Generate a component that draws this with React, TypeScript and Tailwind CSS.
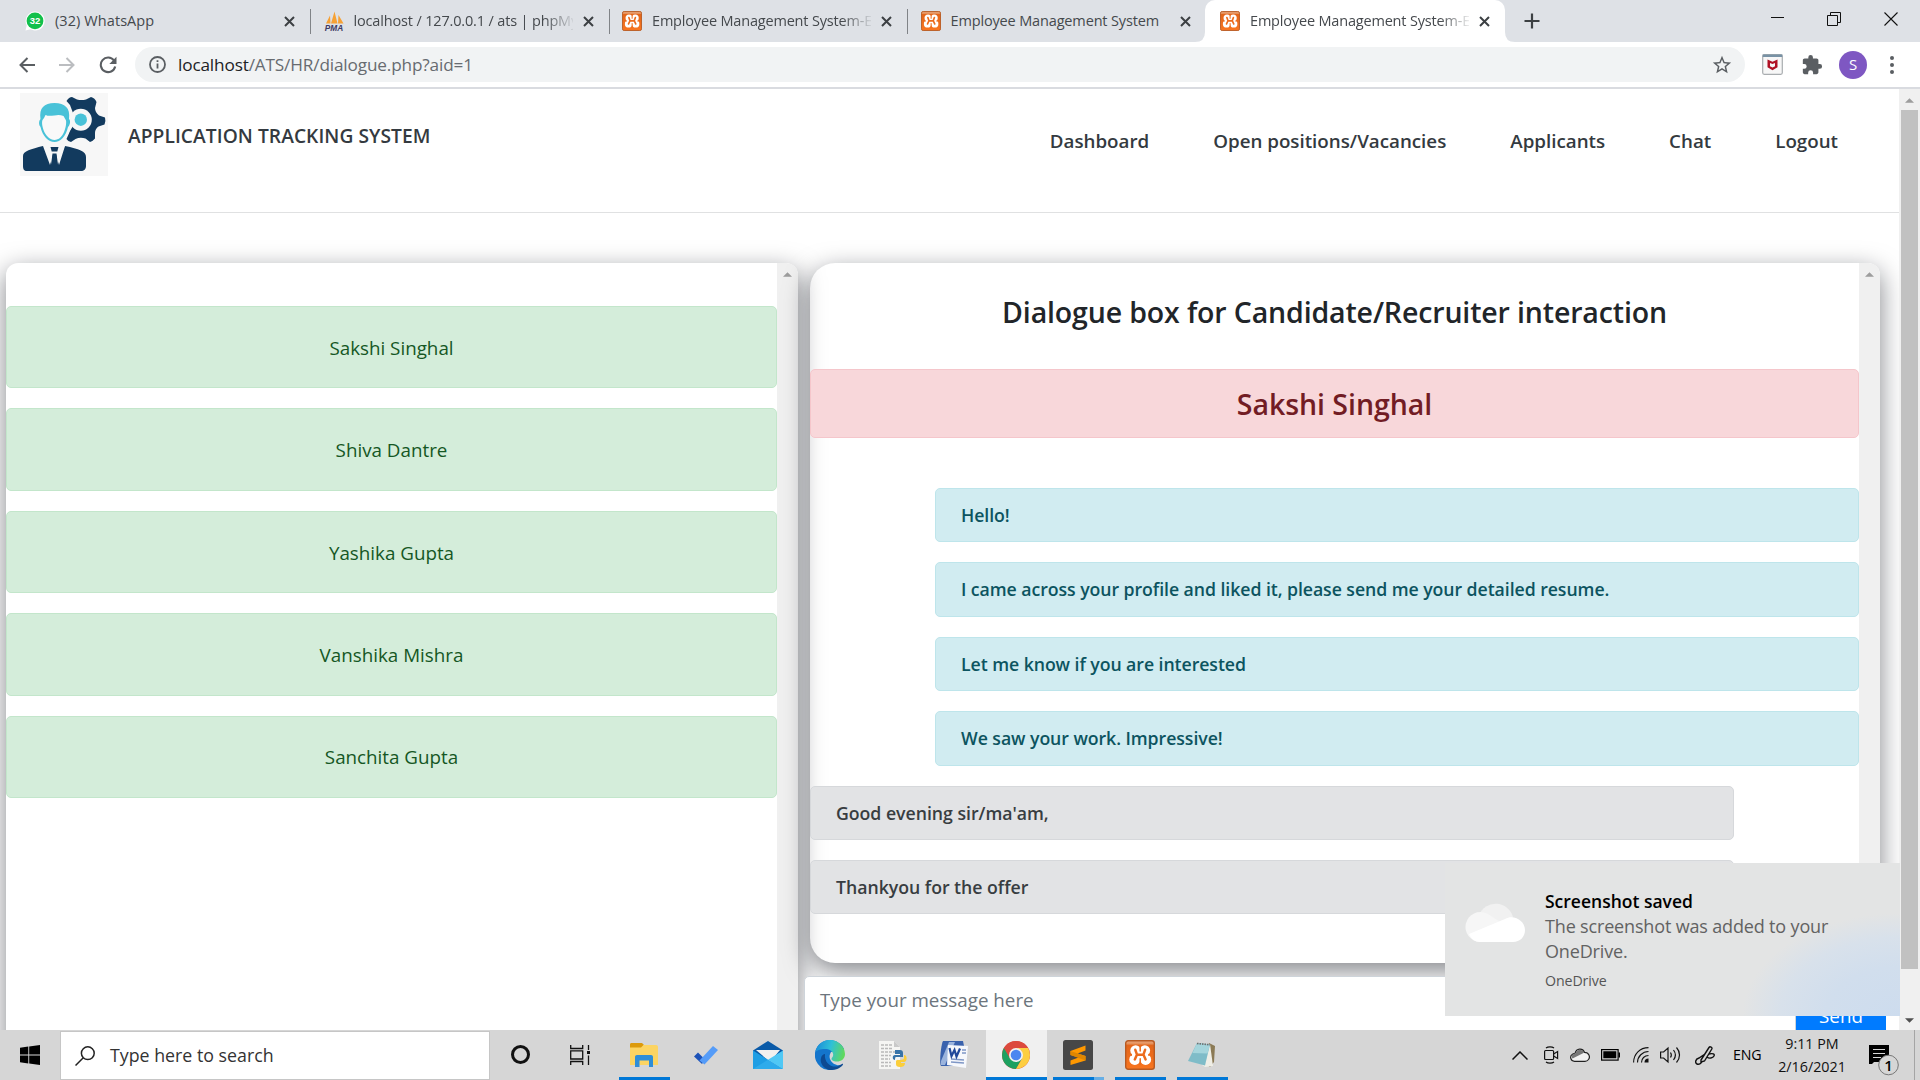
import React from "react";

type P = { children?: React.ReactNode; className?: string };

const Xampp = ({ className = "" }: P) => (
  <svg viewBox="0 0 30 30" preserveAspectRatio="none" className={"shrink-0 " + className}>
    <defs>
      <linearGradient id="xg" x1="0" y1="0" x2="0" y2="1">
        <stop offset="0" stopColor="#e9a77d" />
        <stop offset="0.12" stopColor="#e58d55" />
        <stop offset="0.15" stopColor="#e2651a" />
        <stop offset="1" stopColor="#f9751f" />
      </linearGradient>
    </defs>
    <rect x="0.7" y="0.7" width="28.6" height="28.6" rx="2.5" fill="url(#xg)" stroke="#b85a22" strokeWidth="1.4" />
    <g fill="#fff">
      <circle cx="10.600" cy="10.600" r="5.300" />
      <circle cx="19.800" cy="10.600" r="5.300" />
      <circle cx="9.800" cy="19.400" r="5.500" />
      <circle cx="20.600" cy="19.400" r="5.500" />
      <path d="M7 11h16.500v8.500H7z" />
    </g>
    <path d="M10.300 9.800l1.700 4.800-2.200 4.800M20.100 9.800l-1.700 4.800 2.200 4.800M12 14.800h6.400" fill="none" stroke="#ec6b1c" strokeWidth="2.500" strokeLinecap="round" strokeLinejoin="round" />
    <path d="M15.200 5.500v5.500M15.200 18.800v5.500" stroke="#ec6b1c" strokeWidth="1.500" strokeLinecap="round" />
    <path d="M3.500 15l3.500-1.200v2.200zM26.700 15l-3.500-1.200v2.200z" fill="#ec6b1c" />
  </svg>
);

const WhatsApp = () => (
  <svg viewBox="0 0 20 20" className="h-5 w-5 shrink-0">
    <path d="M10 0.500a9.500 9.500 0 1 1-4.500 17.800L0.500 19.500 1.700 14.500A9.500 9.500 0 0 1 10 .5z" fill="#fff" />
    <circle cx="10" cy="9.900" r="8.400" fill="#12c04b" />
    <text x="10" y="13.300" textAnchor="middle" fontSize="9.500" fontWeight="700" fill="#fff" fontFamily="Liberation Sans, sans-serif">32</text>
  </svg>
);

const Pma = () => (
  <svg viewBox="0 0 20 20" className="h-5 w-5 shrink-0">
    <path d="M2 12.500 6 4.500 6.500 12.500zM7 12.500 10.500 .5l3 12zM14 12.500 14.500 4l5 8.500z" fill="#f6a134" />
    <text x="10" y="19.500" textAnchor="middle" fontSize="8.300" fontWeight="700" fontStyle="italic" fill="#3d3a63" fontFamily="Liberation Sans, sans-serif">PMA</text>
  </svg>
);

const Cross = () => (
  <svg viewBox="0 0 11 11" className="h-[11px] w-[11px] shrink-0" stroke="#3c4043" strokeWidth="2">
    <path d="M1 1l9 9M10 1l-9 9" />
  </svg>
);

type TabData = { icon: React.ReactNode; title: string; fade: boolean; cls: string };

const tabs: TabData[] = [
  { icon: <WhatsApp />, title: "(32) WhatsApp", fade: false, cls: "tracking-[0.080px]" },
  { icon: <Pma />, title: "localhost / 127.0.0.1 / ats | phpMy", fade: true, cls: "tracking-[-0.160px]" },
  { icon: <Xampp className="h-5 w-5" />, title: "Employee Management System-E", fade: true, cls: "tracking-[-0.180px]" },
  { icon: <Xampp className="h-5 w-5" />, title: "Employee Management System", fade: false, cls: "tracking-[-0.150px]" },
];

const fadeMask = "[mask-image:linear-gradient(to_right,#000_190px,transparent_222px)]";

const TabBody = ({ t }: { t: TabData }) => (
  <>
    {t.icon}
    <div className={"ml-[10px] w-[219px] whitespace-nowrap text-[14.500px] leading-5 text-[#45494d] " + t.cls + " " + (t.fade ? fadeMask : "")}>{t.title}</div>
    <div className="ml-[10px]"><Cross /></div>
  </>
);

const TabStrip = () => (
  <div className="flex h-[42px] shrink-0 bg-[#dee1e6] pl-3">
    {tabs.map((t, i) => (
      <div key={i} className="flex h-[42px] w-[298.500px] shrink-0 items-center pl-[13px]">
        <TabBody t={t} />
        {i < 3 && <div className="ml-[15px] h-[25px] w-px bg-[#808387]" />}
      </div>
    ))}
    <svg viewBox="0 0 10 42" className="-ml-[11px] h-[42px] w-[10px] shrink-0" fill="#fff"><path d="M0 42Q10 42 10 32V42z" /></svg>
    <div className="flex h-[42px] w-[300px] shrink-0 items-center rounded-t-[10px] bg-white pl-[15px]">
      <TabBody t={tabs[2]} />
    </div>
    <svg viewBox="0 0 10 42" className="h-[42px] w-[10px] shrink-0" fill="#fff"><path d="M10 42Q0 42 0 32V42z" /></svg>
    <svg viewBox="0 0 16 16" className="ml-[9px] mt-[13px] h-4 w-4" stroke="#3c4043" strokeWidth="2.200"><path d="M8 .5v15M.5 8h15" /></svg>
    <div className="ml-auto mr-[22px] mt-3 flex">
      <svg viewBox="0 0 14 14" className="h-[14px] w-[14px]" stroke="#111" strokeWidth="1"><path d="M0 5.500h13" /></svg>
      <svg viewBox="0 0 14 14" className="ml-[42px] h-[14px] w-[14px]" stroke="#111" fill="none"><path d="M.5 3.500h10v10h-10zM3.500 3V.5h10v10H11" /></svg>
      <svg viewBox="0 0 14 14" className="ml-[43px] h-[14px] w-[14px]" stroke="#111" strokeWidth="1.100"><path d="M.5 .5l13 13M13.500 .5l-13 13" /></svg>
    </div>
  </div>
);

const Toolbar = () => (
  <div className="flex h-[47px] shrink-0 items-center border-b-2 border-[#d9dbe0] bg-white pl-[19px]">
    <svg viewBox="0 0 16 16" className="h-4 w-4" stroke="#5a5e62" strokeWidth="2" fill="none"><path d="M16 8H1.500M8.500 1L1.500 8l7 7" /></svg>
    <svg viewBox="0 0 16 16" className="ml-6 h-4 w-4" stroke="#bbbdc0" strokeWidth="2" fill="none"><path d="M0 8h14.500M7.500 1l7 7-7 7" /></svg>
    <svg viewBox="0 0 18 18" className="ml-[24px] h-[18px] w-[18px]" fill="none"><path d="M15 4.500A7.300 7.300 0 1 0 16.200 10.500" stroke="#5a5e62" strokeWidth="2.100" /><path d="M17.500 .8v7.200h-7.200z" fill="#5a5e62" /></svg>
    <div className="ml-[18px] flex h-[35px] w-[1610px] items-center rounded-full bg-[#f1f3f4] pl-[14px]">
      <svg viewBox="0 0 17 17" className="h-[17px] w-[17px]" stroke="#5a5e62" strokeWidth="1.800" fill="none"><circle cx="8.500" cy="8.500" r="7.500" /><path d="M8.500 7.500v5M8.500 4.200v1.900" /></svg>
      <div className="ml-3 whitespace-nowrap text-[17.200px] leading-6 tracking-[-0.150px] text-[#202124]">localhost<span className="text-[#676b70]">/ATS/HR/dialogue.php?aid=1</span></div>
      <svg viewBox="0 0 24 24" className="ml-auto mr-3 h-[22px] w-[22px]" fill="#5a5e62"><path d="M22 9.240l-7.190-.62L12 2 9.190 8.630 2 9.240l5.460 4.730L5.820 21 12 17.270 18.180 21l-1.630-7.030L22 9.240zM12 15.400l-3.760 2.270 1-4.280-3.320-2.880 4.380-.38L12 6.100l1.710 4.040 4.380.38-3.320 2.880 1 4.280L12 15.400z" /></svg>
    </div>
    <svg viewBox="0 0 21 21" className="ml-[17px] h-[21px] w-[21px]"><rect x=".7" y=".7" width="19.600" height="19.600" rx="1.500" fill="#f7f7f7" stroke="#a9adb0" strokeWidth="1.200" /><path d="M.7 .5h19.600v2.500H.7z" fill="#7892a5" /><path d="M5.500 5.500l5 2.200 5-2.200v7.800l-5 3-5-3z" fill="#b01024" /><path d="M8 9v3.200l2.500 1.400 2.500-1.400V9l-2.500 1.100z" fill="#f7f7f7" /></svg>
    <svg viewBox="0 0 24 24" className="ml-[18px] h-[22px] w-[22px]" fill="#5a5e62"><path d="M20.500 11H19V7c0-1.100-.9-2-2-2h-4V3.500a2.500 2.500 0 0 0-5 0V5H4c-1.100 0-2 .9-2 2v3.800h1.500a2.700 2.700 0 0 1 0 5.400H2V20c0 1.100.9 2 2 2h3.800v-1.500a2.700 2.700 0 0 1 5.400 0V22H17c1.100 0 2-.9 2-2v-4h1.500a2.500 2.500 0 0 0 0-5z" /></svg>
    <div className="ml-[16px] flex h-7 w-7 items-center justify-center rounded-full bg-[#7e57c2] text-[15px] text-white">S</div>
    <svg viewBox="0 0 4 18" className="ml-[23px] h-[18px] w-1" fill="#5a5e62"><circle cx="2" cy="2" r="2" /><circle cx="2" cy="9" r="2" /><circle cx="2" cy="16" r="2" /></svg>
  </div>
);

const Logo = () => (
  <svg viewBox="0 0 88 83" className="ml-5 mt-1 h-[83px] w-[88px] shrink-0">
    <rect width="88" height="83" fill="#f7f7f7" />
    <path d="M46.500 8Q49 4 52 4L57 6.500Q61.500 7.500 66 6.500L71 4Q75 5 76.500 9L75 15Q75 19 79 22.500L85 24.500Q86 28 84.500 31.500L78.500 33.500Q75 36 75 40V45.500Q73 48 70 49L65.500 45.500Q60 44 55.500 46L51 49Q48 48.500 46.500 46L50 38 53 33V20L50 12z" fill="#123a5e" />
    <circle cx="60.800" cy="26.700" r="11" fill="#f7f7f7" />
    <circle cx="60.800" cy="26.700" r="6.200" fill="#49c2d8" />
    <path d="M34.500 7c10 0 17 6 18 16 1 6-1 12-3 15-3 8-8 14-15 14z" fill="#f7f7f7" />
    <path d="M20.500 26C19 15 24 10 34.500 10s16 5 14.500 16c2 2 1 6-1 8-2 9-7.500 15-13.500 15S22.500 43 20.500 34c-2-2-2-6 0-8z" fill="#49c2d8" />
    <path d="M22.500 27c1-1 2-3 3-5 2 1 4 1 9 .5 4-1 6-.5 9 .5 1 2 2 3 2.500 4.500 1 5-2.500 19.500-11.500 19.500S20.500 32 22.500 27z" fill="#f9f9f9" />
    <path d="M3 63c0-5 8-7 20-10l7 19 2-10h5l2 10 6-19c14 3 21 5 21 11v9c0 3-2 5-5 5H7c-3 0-4-2-4-5z" fill="#123a5e" />
    <path d="M24 52l7.500 20L33 60l-3-6zM45 52l-7.500 20L36 60l3-6z" fill="#f7f7f7" />
    <path d="M30.500 54h8l-1.200 4.500h-5.600zM32.500 60.500h4L38 72H31z" fill="#123a5e" />
  </svg>
);

const Arrow = ({ className = "" }: P) => (
  <svg viewBox="0 0 10 5" className={"h-[5px] w-[9px] " + className} fill="currentColor"><path d="M5 0l5 5H0z" /></svg>
);

const people = ["Sakshi Singhal", "Shiva Dantre", "Yashika Gupta", "Vanshika Mishra", "Sanchita Gupta"];
const sent = ["Hello!", "I came across your profile and liked it, please send me your detailed resume.", "Let me know if you are interested", "We saw your work. Impressive!"];
const received = ["Good evening sir/ma'am,", "Thankyou for the offer"];

const Site = () => (
  <div className="flex h-[941px] w-[1899px] shrink-0 flex-col overflow-hidden bg-white">
    <header className="flex h-[124px] shrink-0 border-b border-[#e0e1e2] font-semibold text-[#343a40]">
      <Logo />
      <div className="ml-5 mt-[33px] whitespace-nowrap text-[19.200px] leading-7 tracking-[0.060px]">APPLICATION TRACKING SYSTEM</div>
      <nav className="ml-auto mr-[61px] mt-[38px] flex gap-16 whitespace-nowrap text-[18.760px] leading-7">
        <div>Dashboard</div><div>Open positions/Vacancies</div><div>Applicants</div><div>Chat</div><div>Logout</div>
      </nav>
    </header>
    <main className="flex pl-[6px] pt-[50px]">
      <section className="flex h-[900px] w-[792px] shrink-0 overflow-hidden rounded-[12px] shadow-[0_8px_26px_rgba(5,10,20,0.5)]">
        <div className="flex w-[771px] flex-col gap-5 pt-[43px]">
          {people.map((p) => (
            <div key={p} className="flex h-[82.400px] shrink-0 items-center justify-center rounded-[5px] border border-[#c3e6cb] bg-[#d4edda] pt-[1.500px] text-[18.800px] text-[#155724]">{p}</div>
          ))}
        </div>
        <div className="flex w-[21px] justify-center bg-[#f0f0f0] pt-[9px] text-[#9d9d9d]"><Arrow /></div>
      </section>
      <div className="relative w-[1090px] shrink-0 pl-3">
        <section className="flex h-[700px] w-[1070px] overflow-hidden rounded-l-[25px] rounded-r-[12px] shadow-[0_8px_26px_rgba(5,10,20,0.5)]">
          <div className="flex w-[1049px] flex-col">
            <h3 className="mt-[31px] text-center text-[28.500px] font-semibold leading-9 tracking-[-0.140px] text-[#212529]">Dialogue box for Candidate/Recruiter interaction</h3>
            <div className="mt-[39px] flex h-[69px] shrink-0 items-center justify-center rounded-[5px] border border-[#f5c6cb] bg-[#f8d7da] pt-[2px] text-[28.500px] font-semibold tracking-[-0.050px] text-[#721c24]">Sakshi Singhal</div>
            <div className="mt-[50px] flex flex-col gap-5">
              {sent.map((m) => (
                <div key={m} className="ml-[125px] flex h-[54.400px] shrink-0 items-center rounded-[5px] border border-[#bee5eb] bg-[#d1ecf1] pl-[25px] text-[17.700px] font-semibold tracking-[-0.060px] text-[#0c5460]">{m}</div>
              ))}
              {received.map((m) => (
                <div key={m} className="mr-[125px] flex h-[54.400px] shrink-0 items-center rounded-[5px] border border-[#d6d8db] bg-[#e2e3e5] pl-[25px] pt-px text-[17.700px] font-semibold tracking-[-0.020px] text-[#383d41]">{m}</div>
              ))}
            </div>
          </div>
          <div className="flex w-[21px] justify-center bg-[#f0f0f0] pt-[9px] text-[#9d9d9d]"><Arrow /></div>
        </section>
        <div className="-ml-[6px] mt-[13px] flex h-[60px] w-[1082px]">
          <div className="w-[992px] rounded-l-[5px] border border-[#ced4da] bg-white pl-[15px] pt-[9px] text-[18.800px] leading-7 text-[#6c757d]">Type your message here</div>
          <div className="flex w-[90px] justify-center rounded-r-[5px] bg-[#007bff] pt-[26px] text-[18.800px] leading-7 text-white">Send</div>
        </div>
      </div>
    </main>
  </div>
);

const Toast = () => (
  <div className="absolute left-[1445px] top-[863px] flex h-[153px] w-[455px] bg-[#e3e4e4] bg-[radial-gradient(ellipse_150px_98px_at_100%_100%,#cddcee_0%,#d1deed_50%,#d8e1eb_80%,#e3e4e4_105%)]">
    <svg viewBox="0 0 60 39" className="ml-5 mt-10 h-[39px] w-[60px]">
      <path d="M14 12A18 18 0 0 1 48 14L40 30H10z" fill="#f1f1f1" />
      <path d="M15 39A15 15 0 1 1 22 10.500L40 22 30 39z" fill="#f6f6f6" />
      <path d="M4 31 40 16c9-5 20 2 20 11 0 7-5 12-12 12H15C10 39 6 36 4 31z" fill="#fff" />
    </svg>
    <div className="ml-[20px] mt-[26px] whitespace-nowrap leading-[25px]">
      <div className="text-[17.500px] font-semibold text-black">Screenshot saved</div>
      <div className="text-[18px] tracking-[-0.160px] text-[#626262]">The screenshot was added to your</div>
      <div className="text-[18px] tracking-[-0.160px] text-[#626262]">OneDrive.</div>
      <div className="mt-[5px] text-[14.200px] leading-[24px] tracking-[-0.100px] text-[#555]">OneDrive</div>
    </div>
  </div>
);

const Bar = ({ className = "" }: P) => <div className={"h-[3px] " + className} />;

const Slot = ({ children, className = "" }: P) => (
  <div className={"flex h-[50px] shrink-0 flex-col items-center " + className}>{children}</div>
);

const Taskbar = () => (
  <div className="flex h-[50px] shrink-0 bg-[#d6d6d6]">
    <div className="flex w-[60px] items-center justify-center">
      <svg viewBox="0 0 20 20" className="h-5 w-5" fill="#000"><path d="M0 2.800l8.300-1.200v8H0zM9.200 1.500L20 0v9.600H9.200zM0 10.400h8.300v8L0 17.200zM9.200 10.400H20V20L9.200 18.500z" /></svg>
    </div>
    <div className="mt-px flex h-[49px] w-[430px] items-center border border-[#c6c6c6] bg-white pl-[14px]">
      <svg viewBox="0 0 20 20" className="h-5 w-5" stroke="#222" strokeWidth="1.500" fill="none"><circle cx="12.800" cy="7.200" r="6.400" /><path d="M8.300 11.700L.5 19.500" /></svg>
      <div className="ml-[15px] whitespace-nowrap text-[17.800px] text-[#333]">Type here to search</div>
    </div>
    <Slot className="w-[60px] pt-[15px]"><div className="h-[19px] w-[19px] rounded-full border-[3px] border-[#111]" /></Slot>
    <Slot className="w-[60px] pt-[15px]">
      <svg viewBox="0 0 20 20" className="h-5 w-5" stroke="#111" strokeWidth="1.300" fill="none"><path d="M.7 0v3.500h12V0M.7 20v-3.500h12V20M.7 5.800h12v8.200H.7zM18.500 0v5M18.500 10.500V20" /><path d="M17 6h3v3h-3z" fill="#111" stroke="none" /></svg>
    </Slot>
    <div className="ml-[9px] flex">
      <Slot className="w-[51px]">
        <svg viewBox="0 0 28 24" className="mr-[2px] mt-[13px] h-6 w-7"><path d="M0 1.500C0 .7.500 0 1.500 0H12l2 2-2 3H0z" fill="#dc9a0b" /><path d="M0 4.500h11L13.500 2H26c1 0 2 .7 2 2v18H0z" fill="#fcd462" /><path d="M5 24V14c0-1.200.8-2 2-2h14c1.200 0 2 .8 2 2v10h-4v-6.500H9.500V24z" fill="#2f8ed8" /></svg>
        <Bar className="mt-auto w-full bg-[#0078d7]" />
      </Slot>
      <Slot className="w-[71px]">
        <svg viewBox="0 0 24 20" className="mt-[15px] h-5 w-6"><path d="M0 11.500L4 7.500l7 7-3 4.500z" fill="#1c52b8" /><path d="M5.500 15.500L19 1l5 4L10.500 19.500z" fill="#559cf8" /></svg>
      </Slot>
      <Slot className="w-[54px]">
        <svg viewBox="0 0 30 28" className="mt-[11px] h-7 w-[30px]"><path d="M0 9.500L15 0l15 9.500V18H0z" fill="#0a5aa8" /><path d="M3 9h24L17 21z" fill="#f3f1ef" /><path d="M0 9.500L30 28H0z" fill="#1f9ee4" /><path d="M30 9.500V28L15 18.800z" fill="#50c8f5" /><path d="M0 28l15-9.200L30 28z" fill="#2eabeb" /></svg>
      </Slot>
      <Slot className="w-[70px]">
        <svg viewBox="0 0 30 30" className="mt-[10px] h-[30px] w-[30px]">
          <defs><linearGradient id="e1" x1="0" y1=".3" x2="1" y2=".5"><stop offset="0" stopColor="#1b8cd8" /><stop offset=".5" stopColor="#2fc0d8" /><stop offset="1" stopColor="#61d95b" /></linearGradient></defs>
          <path d="M15 0a15 15 0 1 0 11 25c-4 1-9-1-11-6-1-3 0-5 1-7L29 9C27 4 21 0 15 0z" fill="#1475cc" />
          <path d="M.3 12A15 15 0 0 1 30 14c0 5-4 7.500-8 7.500-4 0-5.500-1.500-5.500-2.700 0-1 1.700-1.600 1.700-4C18.200 11 14 9 10 9 5 9 1.500 10.500.3 12z" fill="url(#e1)" />
          <path d="M10 14c-1 8 5 13.500 12 12.500l5-2.500c.8-.5 1.300.2.800.9C25 28.500 20 30 15 30 9 29.500 4.500 23 6 18c.8-3 2.500-4 4-4z" fill="#0d4a92" />
        </svg>
      </Slot>
      <Slot className="w-[56px]">
        <svg viewBox="0 0 28 28" className="mt-[11px] h-7 w-7"><path d="M0 0h15l6 6v22H0z" fill="#f5f5f3" /><path d="M15 0v6h6z" fill="#c9c9c9" /><path d="M2 4h11M2 7.500h11M2 11h16M2 14.500h10M2 18h9M2 21.500h10M2 25h10" stroke="#b9b9b9" strokeWidth="1.300" strokeDasharray="3 1" /><path d="M16 9h5c2 0 3 1 3 3v4h-7c-1 0-1 2-1 3-3 0-3-5 0-5h5v-1h-5z" fill="#3773a8" /><path d="M25 14c4 0 3 7 0 7h-3v1h4c0 3-2 4-5 4-3 0-4-1-4-3v-3c0-2 8 0 8-3z" fill="#fbce3b" /></svg>
      </Slot>
      <Slot className="w-[65px]">
        <svg viewBox="0 0 28 28" className="mt-[11px] h-7 w-7"><path d="M3 0h20l1 5-3 20H1C-1 22 1 4 3 0z" fill="#3a62ad" /><path d="M1 20L9 1h6L5 24H1z" fill="#9bb4dd" /><path d="M8 4l20 1-2 22-19-3z" fill="#f6f8fc" /><path d="M11 18l13 1M11 21l13 1M22 9h4M22 12h4" stroke="#7f97c6" strokeWidth="1.300" /><path d="M9.500 7l2 8 3-6 2 6.500L20 7.500" fill="none" stroke="#21489a" strokeWidth="2.200" /></svg>
      </Slot>
      <Slot className="w-[61px] bg-[#f0f0f0]">
        <svg viewBox="0 0 28 28" className="mr-[2px] mt-[11px] h-7 w-7"><circle cx="14" cy="14" r="14" fill="#dc4a3d" /><path d="M1.900 7A14 14 0 0 0 14 28l6-10.500L14 20l-6-2.500z" fill="#1da160" /><path d="M26.100 7A14 14 0 0 1 14 28l6.100-10.500L20 10 14 7z" fill="#fdce42" /><path d="M1.900 7A14 14 0 0 1 26.100 7H14z" fill="#dc4a3d" /><circle cx="14" cy="14" r="7" fill="#f1f1f1" /><circle cx="14" cy="14" r="5.300" fill="#4a86f0" /></svg>
        <Bar className="mt-auto w-full bg-[#0078d7]" />
      </Slot>
      <Slot className="ml-[6px] w-[51px]">
        <svg viewBox="0 0 30 30" className="mr-[2px] mt-[10px] h-[30px] w-[30px]"><rect width="30" height="30" rx="2.500" fill="#474747" /><path d="M7.500 11L22.500 5.500v5L14.500 13.500l8 2.500v4.500L7.500 25v-4.500l8-3-8-2.500z" fill="#ff9800" /><path d="M7.500 11v4l15 5.500V16z" fill="#e08600" /></svg>
        <div className="mt-auto flex w-full"><Bar className="w-[41px] bg-[#0078d7]" /><Bar className="w-[10px] bg-[#66aee5]" /></div>
      </Slot>
      <Slot className="ml-[11px] w-[51px]">
        <Xampp className="mr-[2px] mt-[10px] h-[30px] w-[30px]" />
        <Bar className="mt-auto w-full bg-[#0078d7]" />
      </Slot>
      <Slot className="ml-[11px] w-[51px]">
        <svg viewBox="0 0 28 28" className="mr-[2px] mt-[11px] h-7 w-7"><path d="M21 2l6 3-1 16-4 5-5-4z" fill="#8b7a55" /><path d="M22 3l3 22-8 1-3-2z" fill="#efeee6" /><path d="M9 2l13 1.500-5 21L0 20z" fill="#7fbcc8" /><path d="M9 2l13 1.500-2.500 9L4.500 12z" fill="#a5d5dc" /><path d="M9 2.500l13 1.300" stroke="#6d6d6d" strokeWidth="1.600" strokeDasharray="1.500 1" /></svg>
        <Bar className="mt-auto w-full bg-[#0078d7]" />
      </Slot>
    </div>
    <div className="ml-auto flex items-center">
      <svg viewBox="0 0 16 9" className="h-[9px] w-4" stroke="#111" strokeWidth="1.500" fill="none"><path d="M.5 8.500L8 1l7.500 7.500" /></svg>
      <svg viewBox="0 0 15 18" className="ml-4 h-[18px] w-[15px]" stroke="#111" strokeWidth="1.200" fill="none"><rect x=".6" y="4.500" width="9" height="9" rx="1" /><path d="M9.600 8l4-2.500v7l-4-2.500M2 2c2-1.600 6-1.600 8 0M2 16c2 1.600 6 1.600 8 0" /></svg>
      <svg viewBox="0 0 20 14" className="ml-[11px] h-[14px] w-5"><path d="M4.500 13.300C.5 13.300-.7 8 2.500 6.200 4 5.500 4.500 5.700 5 5.300 6.500 .3 12.500 -.3 14.500 4.300c4.500 0 6 4.700 4 7.200-1 1.300-2 1.800-3.500 1.800z" fill="#f2f2f2" stroke="#222" strokeWidth="1.200" /><path d="M2.800 6.500C4 5.700 5 6.300 5.500 5.500 7 1 12 .5 14 4.700L2.500 10.500C1.500 9 1.500 7.500 2.800 6.500z" fill="#777" /></svg>
      <svg viewBox="0 0 19 12" className="ml-[11px] h-3 w-[19px]"><rect x=".6" y=".6" width="16.500" height="10.500" fill="none" stroke="#000" strokeWidth="1.200" /><path d="M2.300 2.300h13v7h-13zM17.500 3.500h1.500v5h-1.500z" /></svg>
      <svg viewBox="0 0 16 16" className="ml-[13px] h-4 w-4" stroke="#111" strokeWidth="1.100" fill="none"><path d="M.6 15.500C.6 7 7 .6 15.500 .6M4.500 15.500c0-6 5-11 11-11M8.500 15.500c0-4 3-7 7-7" /><path d="M11.500 15.500a4 4 0 0 1 4-4v4z" fill="#111" stroke="none" /></svg>
      <svg viewBox="0 0 21 18" className="ml-[11px] h-[18px] w-[21px]" stroke="#111" strokeWidth="1.200" fill="none"><path d="M.6 6h3L8 2v14L3.600 12h-3zM10.500 6.500c1 1.500 1 3.500 0 5M13.500 4c2.300 3 2.300 7 0 10M16.500 1.500c4 4.500 4 10.500 0 15" /></svg>
      <svg viewBox="0 0 20 20" className="ml-[14px] h-5 w-5" stroke="#111" strokeWidth="1.400" fill="none"><path d="M6 15L14 2.500c1-1.500 3.500 0 2.800 1.500L9.500 16 6 17zM10 9L4 13c-4 1-4 5-2 6s5-1 5-3M14 9c4-1 6 0 5 2s-5 3-7 1" /></svg>
      <div className="ml-[18px] w-[28px] text-[14.200px] tracking-[-0.200px]">ENG</div>
      <div className="ml-[16px] flex w-[70px] flex-col items-center whitespace-nowrap text-[14.300px] leading-[23px] text-[#111]"><div>9:11 PM</div><div>2/16/2021</div></div>
      <div className="relative ml-[22px] mr-[15px] h-[50px] w-[30px]">
        <svg viewBox="0 0 32 50" className="h-[50px] w-8"><path d="M0 15h20v17H5l-2 2H0z" /><path d="M4 19.500h12M4 23.500h12M4 27.500h8" stroke="#d6d6d6" strokeWidth="1.200" /><circle cx="19.500" cy="35" r="9.800" fill="#d6d6d6" stroke="#777" /></svg>
        <div className="absolute left-[10px] top-[25px] w-[19px] text-center text-[15px] font-semibold leading-5">1</div>
      </div>
      <div className="mr-[5px] h-[50px] w-px bg-[#a5a5a5]" />
    </div>
  </div>
);

export default function App() {
  return (
    <div className="relative flex h-[1080px] w-[1920px] flex-col overflow-hidden bg-white font-['Open_Sans',sans-serif]">
      <TabStrip />
      <Toolbar />
      <div className="flex h-[941px] shrink-0">
        <Site />
        <div className="flex w-[21px] flex-col items-center bg-[#f0f0f0]">
          <Arrow className="mt-[9px] text-[#9d9d9d]" />
          <div className="mt-[7px] h-[859px] w-[17px] bg-[#c1c1c1]" />
          <Arrow className="mt-[49px] rotate-180 text-[#505050]" />
        </div>
      </div>
      <Taskbar />
      <Toast />
    </div>
  );
}
